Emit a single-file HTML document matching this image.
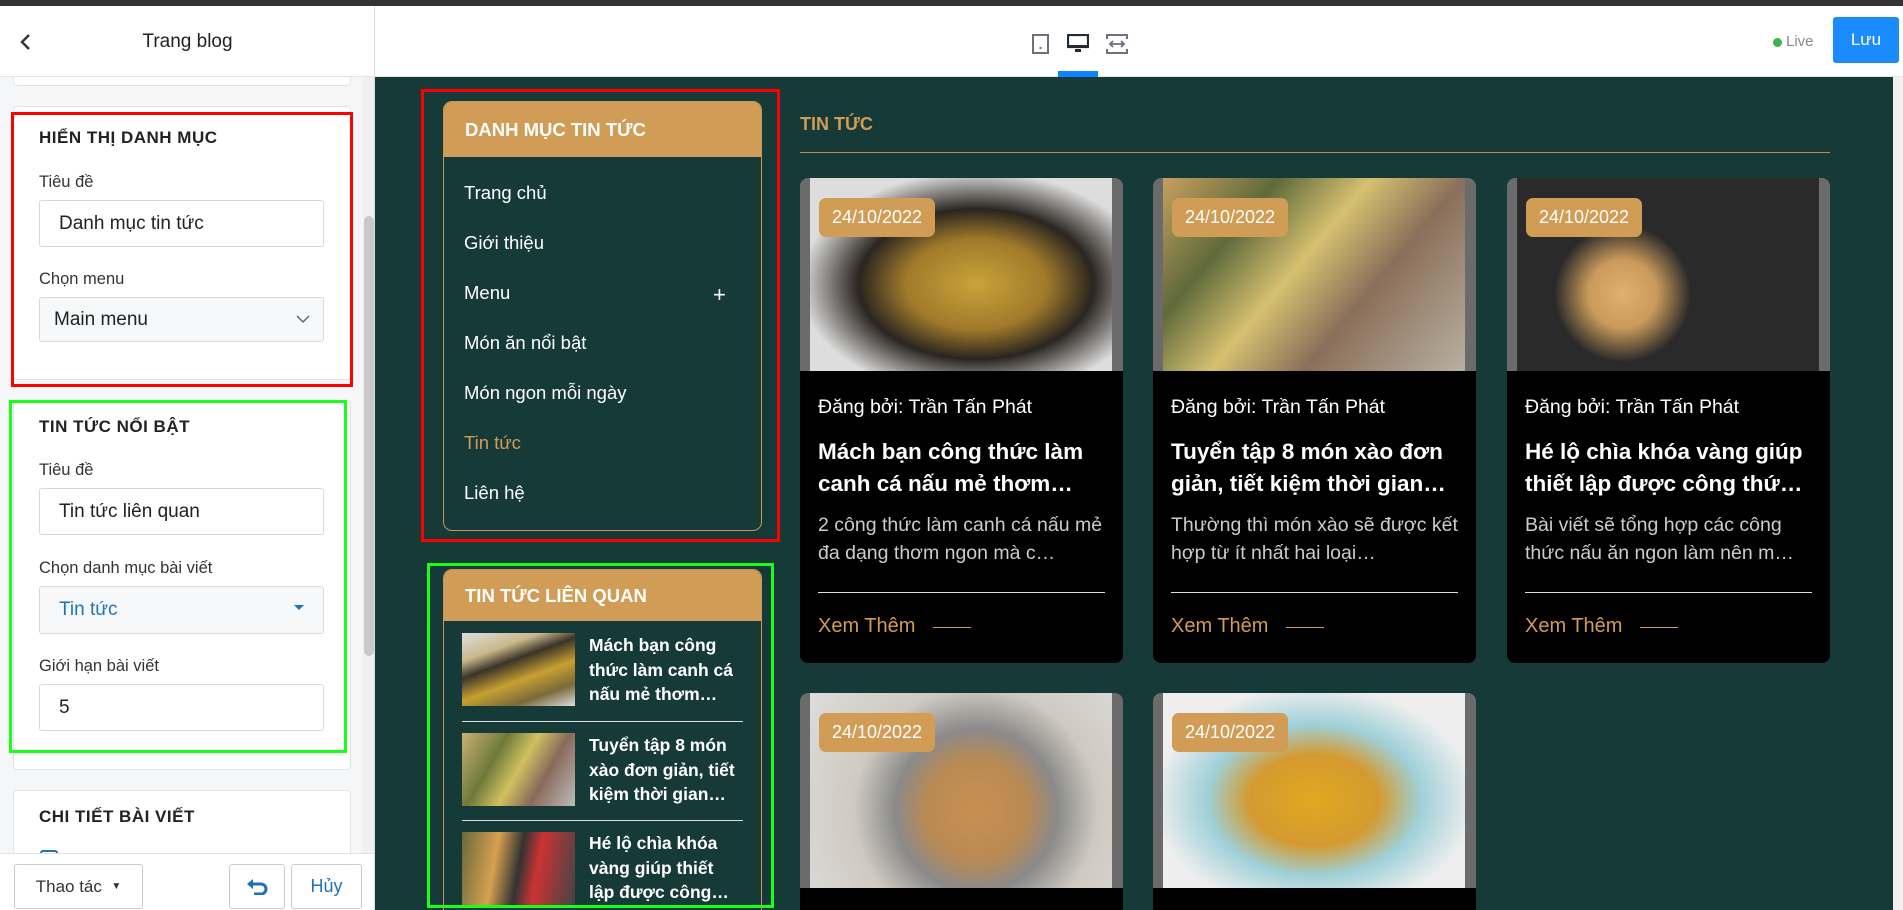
<!DOCTYPE html>
<html><head><meta charset="utf-8">
<style>
*{box-sizing:border-box;margin:0;padding:0}
html{overflow:hidden;width:1903px;height:910px}
body{width:1903px;height:910px;overflow:hidden;font-family:"Liberation Sans","Noto Sans CJK SC",sans-serif;background:#163a38;position:relative}
.abs{position:absolute}
#topbar{left:0;top:0;width:1903px;height:6px;background:#333}
#header{left:0;top:6px;width:1903px;height:71px;background:#fff;border-bottom:1px solid #e5e5e5}
#left{left:0;top:6px;width:375px;height:904px;background:#f4f6f8;border-right:1px solid #ddd;overflow:hidden}
.card{position:absolute;background:#fff;border:1px solid #e1e3e5;border-radius:4px}
.sec{font-size:17px;font-weight:bold;color:#222;letter-spacing:.5px}
.lbl{font-size:16.5px;color:#333}
.inp{position:absolute;background:#fff;border:1px solid #d9d9d9;border-radius:3px;font-size:19px;color:#222;padding-left:19px;display:flex;align-items:center}
.sel{background:#f7f8f9}
.btn{position:absolute;background:#fff;border:1px solid #c9cccf;border-radius:3px;display:flex;align-items:center;justify-content:center;font-size:18px}
.menuc{position:absolute;border:1px solid #c9975a;border-radius:9px;overflow:hidden}
.mh{background:#d19c55;color:#fff;font-weight:bold;font-size:18.5px;padding-left:21px;display:flex;align-items:center}
.mi{position:absolute;left:20px;font-size:18.5px;color:#fff}
.pc{position:absolute;width:323px;background:#000;border-radius:8px;overflow:hidden}
.pimg{position:absolute;left:0;top:0;width:323px;height:193px;background:#6b6b6b}
.pimg>div{position:absolute;left:10px;top:0;width:302px;height:193px}
.date{position:absolute;left:19px;top:20px;width:116px;height:39px;background:#d19c55;border-radius:7px;color:#fff;font-size:18px;display:flex;align-items:center;justify-content:center}
.by{position:absolute;left:18px;top:218px;font-size:19.5px;color:#fff}
.tt{position:absolute;left:18px;top:258px;width:295px;font-size:22.5px;font-weight:bold;color:#fff;line-height:32px}
.ex{position:absolute;left:18px;top:333px;width:290px;font-size:19.5px;color:#ccc;line-height:28px}
.dv{position:absolute;left:18px;top:414px;width:287px;height:1px;background:#ddd}
.xm{position:absolute;left:18px;top:437px;font-size:20px;color:#d39b55}
.xl{position:absolute;left:133px;top:449px;width:38px;height:1px;background:#d39b55}
.ri{position:absolute;left:18px;width:113px;height:73px}
.rt{position:absolute;left:145px;width:150px;font-size:17.5px;font-weight:bold;color:#fff;line-height:24.5px}
.rd{position:absolute;left:18px;width:281px;height:1px;background:#ddd}
</style></head><body>
<div class="abs" id="topbar"></div>
<div class="abs" id="header">
  <svg class="abs" style="left:1032px;top:28px" width="17" height="20" viewBox="0 0 17 20"><rect x="1" y="1" width="15" height="18" fill="none" stroke="#6b7079" stroke-width="2"/><rect x="7.5" y="13" width="2" height="2" fill="#6b7079"/></svg>
  <svg class="abs" style="left:1067px;top:28px" width="22" height="20" viewBox="0 0 22 20"><rect x="1" y="1" width="20" height="12" fill="none" stroke="#222a33" stroke-width="2.2"/><rect x="1" y="11" width="20" height="3" fill="#222a33"/><rect x="8" y="15" width="6" height="3" fill="#222a33"/></svg>
  <svg class="abs" style="left:1106px;top:28px" width="22" height="20" viewBox="0 0 22 20"><path d="M1 5V1h20v4M1 15v4h20v-4" fill="none" stroke="#6b7079" stroke-width="2"/><path d="M4 10h14M7 7l-3 3 3 3M15 7l3 3-3 3" fill="none" stroke="#6b7079" stroke-width="1.8"/></svg>
  <div class="abs" style="left:1058px;top:65px;width:40px;height:6px;background:#0a84ff"></div>
  <div class="abs" style="left:1773px;top:32px;width:9px;height:9px;border-radius:50%;background:#3cb44b"></div>
  <div class="abs" style="left:1786px;top:27px;font-size:15px;color:#888">Live</div>
  <div class="abs" style="left:1833px;top:11px;width:66px;height:46px;background:#1a8cff;border-radius:3px;color:#fff;font-size:17px;display:flex;align-items:center;justify-content:center">Lưu</div>
</div>
<div class="abs" id="left">
  <div class="card" style="left:13px;top:40px;width:338px;height:40px"></div>
  <div class="abs" style="left:0;top:0;width:375px;height:71px;background:#fff;border-bottom:1px solid #e5e5e5"></div>
  <svg class="abs" style="left:19px;top:27px" width="12" height="18" viewBox="0 0 12 18"><path d="M10 2L3 9l7 7" fill="none" stroke="#333" stroke-width="2.4"/></svg>
  <div class="abs" style="left:0;width:375px;top:25px;text-align:center;font-size:19px;color:#222">Trang blog</div>
  <div class="card" style="left:13px;top:100px;width:338px;height:274px"></div>
  <div class="abs" style="left:11px;top:106px;width:342px;height:275px;border:3px solid #f00"></div>
  <div class="abs sec" style="left:39px;top:122px">HIỂN THỊ DANH MỤC</div>
  <div class="abs lbl" style="left:39px;top:167px">Tiêu đề</div>
  <div class="inp" style="left:39px;top:194px;width:285px;height:47px">Danh mục tin tức</div>
  <div class="abs lbl" style="left:39px;top:264px">Chọn menu</div>
  <div class="inp sel" style="left:39px;top:291px;width:285px;height:45px;padding-left:14px">Main menu</div>
  <svg class="abs" style="left:296px;top:309px" width="14" height="9" viewBox="0 0 14 9"><path d="M1 1l6 6 6-6" fill="none" stroke="#666" stroke-width="1.5"/></svg>
  <div class="card" style="left:13px;top:394px;width:338px;height:370px"></div>
  <div class="abs" style="left:9px;top:394px;width:338px;height:353px;border:3px solid #1aff1a"></div>
  <div class="abs sec" style="left:39px;top:411px">TIN TỨC NỔI BẬT</div>
  <div class="abs lbl" style="left:39px;top:455px">Tiêu đề</div>
  <div class="inp" style="left:39px;top:482px;width:285px;height:47px">Tin tức liên quan</div>
  <div class="abs lbl" style="left:39px;top:553px">Chọn danh mục bài viết</div>
  <div class="inp sel" style="left:39px;top:580px;width:285px;height:48px;color:#1f73b7">Tin tức</div>
  <div class="abs" style="left:294px;top:599px;border:5px solid transparent;border-top:5px solid #1f73b7;border-bottom:none"></div>
  <div class="abs lbl" style="left:39px;top:651px">Giới hạn bài viết</div>
  <div class="inp" style="left:39px;top:678px;width:285px;height:47px">5</div>
  <div class="card" style="left:13px;top:784px;width:338px;height:130px"></div>
  <div class="abs sec" style="left:39px;top:801px">CHI TIẾT BÀI VIẾT</div>
  <div class="abs" style="left:40px;top:844px;width:18px;height:8px;border:2px solid #1f73b7;border-bottom:none;border-radius:3px 3px 0 0"></div>
  <div class="abs" style="left:363px;top:71px;width:12px;height:786px;background:#f0f0f0"></div>
  <div class="abs" style="left:364px;top:210px;width:10px;height:440px;background:#c9c9c9;border-radius:5px"></div>
  <div class="abs" style="left:0;top:847px;width:375px;height:57px;background:#fff;border-top:1px solid #e1e3e5"></div>
  <div class="btn" style="left:14px;top:858px;width:129px;height:45px;color:#333;font-size:17px">Thao tác&nbsp;&nbsp;<span style="font-size:10px">▼</span></div>
  <div class="btn" style="left:229px;top:858px;width:56px;height:45px"><svg width="22" height="16" viewBox="0 0 22 16"><path d="M5 5h10a5 5 0 0 1 0 10H8" fill="none" stroke="#1f6fb7" stroke-width="3"/><path d="M1 5l6-5v10z" fill="#1f6fb7"/></svg></div>
  <div class="btn" style="left:291px;top:858px;width:71px;height:45px;color:#1f73b7">Hủy</div>
</div>

<div class="abs" style="left:1893px;top:77px;width:10px;height:833px;background:#f1f1f1"></div>
<div class="abs" style="left:421px;top:89px;width:359px;height:453px;border:3px solid #f00"></div>
<div class="menuc" style="left:443px;top:101px;width:319px;height:430px">
  <div class="mh" style="height:55px">DANH MỤC TIN TỨC</div>
  <div class="mi" style="top:80px">Trang chủ</div>
  <div class="mi" style="top:130px">Giới thiệu</div>
  <div class="mi" style="top:180px">Menu</div>
  <div class="abs" style="left:269px;top:180px;color:#fff;font-size:22px;font-weight:200">+</div>
  <div class="mi" style="top:230px">Món ăn nổi bật</div>
  <div class="mi" style="top:280px">Món ngon mỗi ngày</div>
  <div class="mi" style="top:330px;color:#d39b55">Tin tức</div>
  <div class="mi" style="top:380px">Liên hệ</div>
</div>
<div class="abs" style="left:427px;top:563px;width:347px;height:345px;border:3px solid #1aff1a"></div>
<div class="menuc" style="left:443px;top:569px;width:319px;height:341px;border-bottom:none;border-radius:9px 9px 0 0">
  <div class="mh" style="height:51px">TIN TỨC LIÊN QUAN</div>
  <div class="ri" style="top:63px;background:linear-gradient(160deg,#ddd 0,#c9b88a 25%,#3a3328 40%,#c7a030 60%,#7a6a3a 80%,#ddd 100%)"></div>
  <div class="rt" style="top:63px">Mách bạn công thức làm canh cá nấu mẻ thơm…</div>
  <div class="rd" style="top:151px"></div>
  <div class="ri" style="top:163px;background:linear-gradient(120deg,#c9b070,#6e7a3a 30%,#d0c060 50%,#8a6a5a 70%,#bbb 100%)"></div>
  <div class="rt" style="top:163px">Tuyển tập 8 món xào đơn giản, tiết kiệm thời gian…</div>
  <div class="rd" style="top:250px"></div>
  <div class="ri" style="top:262px;background:linear-gradient(100deg,#6a6a3a,#d6a050 30%,#333 50%,#c33 65%,#444 100%)"></div>
  <div class="rt" style="top:261px">Hé lộ chìa khóa vàng giúp thiết lập được công…</div>
</div>

<div class="abs" style="left:800px;top:114px;font-size:18px;font-weight:bold;color:#d39b55">TIN TỨC</div>
<div class="abs" style="left:800px;top:152px;width:1030px;height:1px;background:#b88e52"></div>

<div class="pc" style="left:800px;top:178px;height:485px">
  <div class="pimg"><div style="background:radial-gradient(ellipse at 55% 55%,#c9a23a 0,#a07a2a 30%,#2a2520 50%,#ddd 75%)"></div></div>
  <div class="date">24/10/2022</div>
  <div class="by">Đăng bởi: Trần Tấn Phát</div>
  <div class="tt">Mách bạn công thức làm canh cá nấu mẻ thơm…</div>
  <div class="ex">2 công thức làm canh cá nấu mẻ đa dạng thơm ngon mà c…</div>
  <div class="dv"></div><div class="xm">Xem Thêm</div><div class="xl"></div>
</div>
<div class="pc" style="left:1153px;top:178px;height:485px">
  <div class="pimg"><div style="background:linear-gradient(130deg,#c7a060,#5f6a3a 25%,#d6c070 45%,#8a6f5a 65%,#b8b0a0 100%)"></div></div>
  <div class="date">24/10/2022</div>
  <div class="by">Đăng bởi: Trần Tấn Phát</div>
  <div class="tt">Tuyển tập 8 món xào đơn giản, tiết kiệm thời gian…</div>
  <div class="ex">Thường thì món xào sẽ được kết hợp từ ít nhất hai loại…</div>
  <div class="dv"></div><div class="xm">Xem Thêm</div><div class="xl"></div>
</div>
<div class="pc" style="left:1507px;top:178px;height:485px">
  <div class="pimg"><div style="background:radial-gradient(circle at 35% 60%,#e0b070 0,#c99a5a 15%,#2a2a2a 30%),linear-gradient(90deg,#333,#444)"></div></div>
  <div class="date">24/10/2022</div>
  <div class="by">Đăng bởi: Trần Tấn Phát</div>
  <div class="tt">Hé lộ chìa khóa vàng giúp thiết lập được công thứ…</div>
  <div class="ex">Bài viết sẽ tổng hợp các công thức nấu ăn ngon làm nên m…</div>
  <div class="dv"></div><div class="xm">Xem Thêm</div><div class="xl"></div>
</div>
<div class="pc" style="left:800px;top:693px;height:217px;border-radius:8px 8px 0 0">
  <div class="pimg" style="height:195px"><div style="height:195px;background:radial-gradient(circle at 55% 60%,#c89050 0,#b98a55 25%,#8a8a8a 40%,#cfcac0 60%,#ddd 100%)"></div></div>
  <div class="date">24/10/2022</div>
</div>
<div class="pc" style="left:1153px;top:693px;height:217px;border-radius:8px 8px 0 0">
  <div class="pimg" style="height:195px"><div style="height:195px;background:radial-gradient(ellipse at 50% 55%,#e0a820 0,#d49a30 30%,#9fd0d8 50%,#eee 75%)"></div></div>
  <div class="date">24/10/2022</div>
</div>
</body></html>
